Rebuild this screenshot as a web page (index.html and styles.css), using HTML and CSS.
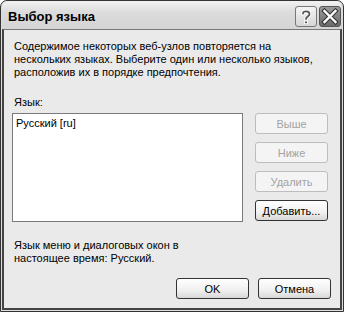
FILE: index.html
```html
<!DOCTYPE html>
<html lang="ru">
<head>
    <meta charset="UTF-8">
    <title>Выбор языка</title>
    <link rel="stylesheet" href="styles.css">
</head>
<body>

    <!-- Dialog window -->
    <div class="window">
        <div class="titlebar">
            <span class="title">Выбор языка</span>
            <div class="title-buttons">
                <div class="tbtn help">
                    <svg width="22" height="21" viewBox="0 0 22 21">
                        <path d="M8 7.5 C8 4.5 14.5 4.5 14.5 8 C14.5 10.5 11 10.5 11 13" fill="none" stroke="#fff" stroke-width="3.8" stroke-linecap="round"/>
                        <path d="M8 7.5 C8 4.5 14.5 4.5 14.5 8 C14.5 10.5 11 10.5 11 13" fill="none" stroke="#555" stroke-width="1.8" stroke-linecap="round"/>
                        <rect x="9.2" y="14.6" width="3.6" height="3.4" fill="#fff"/>
                        <rect x="10" y="15.4" width="2" height="1.8" fill="#555"/>
                    </svg>
                </div>
                <div class="tbtn close">
                    <svg width="22" height="21" viewBox="0 0 22 21">
                        <path d="M5.5 5 L16.5 16 M16.5 5 L5.5 16" stroke="#333" stroke-width="4.5" stroke-linecap="square"/>
                        <path d="M5.5 5 L16.5 16 M16.5 5 L5.5 16" stroke="#fff" stroke-width="2.4" stroke-linecap="square"/>
                    </svg>
                </div>
            </div>
        </div>

        <div class="client">
            <p class="intro">Содержимое некоторых веб-узлов повторяется на<br>нескольких языках. Выберите один или несколько языков,<br>расположив их в порядке предпочтения.</p>

            <div class="label">Язык:</div>
            <div class="lang-row">
                <div class="listbox">
                    <div class="list-item">Русский [ru]</div>
                </div>
                <div class="side-buttons">
                    <button class="btn" disabled>Выше</button>
                    <button class="btn" disabled>Ниже</button>
                    <button class="btn" disabled>Удалить</button>
                    <button class="btn">Добавить...</button>
                </div>
            </div>

            <p class="current">Язык меню и диалоговых окон в<br>настоящее время: Русский.</p>

            <div class="footer">
                <button class="btn">OK</button>
                <button class="btn">Отмена</button>
            </div>
        </div>
    </div>

</body>
</html>
```

FILE: styles.css
```css
body {
    margin: 0;
    background-color: #fff;
    font-family: "Liberation Sans", Arial, sans-serif;
    font-size: 11px;
    color: #000;
}
/* Window frame */
.window {
    width: 344px;
    height: 312px;
    box-sizing: border-box;
    border: 1px solid #333;
    border-radius: 7px 7px 0 0;
    background-color: #dedede;
    padding: 0 1px 1px;
    display: flex;
    flex-direction: column;
}
.titlebar {
    height: 28px;
    display: flex;
    align-items: center;
    justify-content: space-between;
    padding: 0 1px 0 6px;
    border-radius: 6px 6px 0 0;
    background: linear-gradient(#f2f2f2, #dcdcdc 40%, #d4d4d4);
}
.title {
    font-weight: bold;
    font-size: 13px;
    color: #000;
    margin-top: 2px;
}
.title-buttons {
    display: flex;
    gap: 2px;
    margin-top: 2px;
}
.tbtn {
    width: 22px;
    height: 21px;
    box-sizing: border-box;
    border: 1px solid #777;
    border-radius: 3px;
    display: flex;
    align-items: center;
    justify-content: center;
}
.tbtn svg {
    display: block;
    margin: -1px;
}
.help {
    background: linear-gradient(#f4f4f4, #d6d6d6);
}
.close {
    background: linear-gradient(#9a9a9a, #6a6a6a);
    border-color: #555;
}
/* Client area */
.client {
    flex-grow: 1;
    background-color: #eaeaea;
    border: 2px solid #444;
    border-top: 1px solid #777;
    padding: 10px 9px 0 8px;
}
.intro, .current {
    margin: 0;
    padding-left: 2px;
    line-height: 13px;
}
.label {
    margin-top: 17px;
    padding-left: 2px;
    line-height: 13px;
}
.lang-row {
    display: flex;
    gap: 12px;
    margin-top: 4px;
}
.listbox {
    width: 231px;
    height: 109px;
    box-sizing: border-box;
    background-color: #fff;
    border: 1px solid #7a7a7a;
    padding: 3px 3px;
}
.list-item {
    line-height: 13px;
}
.side-buttons {
    display: flex;
    flex-direction: column;
    gap: 8px;
}
.btn {
    width: 73px;
    height: 21px;
    box-sizing: border-box;
    font-family: inherit;
    font-size: 11px;
    color: #000;
    border: 1px solid #333;
    border-radius: 3px;
    background: linear-gradient(#ffffff, #f0f0f0 60%, #d8d8d8);
    padding: 0;
}
.btn:disabled {
    color: #a3a3a3;
    border-color: #bdbdbd;
    background: #f4f4f4;
}
.current {
    margin-top: 17px;
}
.footer {
    display: flex;
    justify-content: flex-end;
    gap: 9px;
    margin-top: 13px;
}
```
